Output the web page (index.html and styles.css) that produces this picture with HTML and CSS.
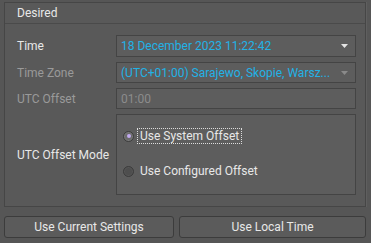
FILE: index.html
```html
<!DOCTYPE html>
<html>
<head>
<meta charset="utf-8">
<link rel="stylesheet" href="styles.css">
</head>
<body>
<div class="panel">
  <div class="group">
    <div class="group-header">Desired</div>
    <div class="form">
      <div class="label">Time</div>
      <div class="combo combo-tall">
        <span class="value">18 December 2023 11:22:42</span>
        <svg class="arrow" width="7" height="4" viewBox="0 0 7 4"><polygon points="0,0 7,0 3.5,4" fill="#e4e4e4"/></svg>
      </div>
      <div class="label disabled">Time Zone</div>
      <div class="combo">
        <span class="value">(UTC+01:00) Sarajewo, Skopie, Warsz...</span>
        <svg class="arrow" width="7" height="4" viewBox="0 0 7 4"><polygon points="0,0 7,0 3.5,4" fill="#8a8a8a"/></svg>
      </div>
      <div class="label disabled">UTC Offset</div>
      <div class="field">01:00</div>
      <div class="label">UTC Offset Mode</div>
      <div class="radio-box">
        <div class="radio-row">
          <span class="radio checked"></span>
          <span class="radio-text focused">Use System Offset</span>
        </div>
        <div class="radio-row">
          <span class="radio"></span>
          <span class="radio-text">Use Configured Offset</span>
        </div>
      </div>
    </div>
  </div>
  <div class="buttons">
    <div class="btn btn-left">Use Current Settings</div>
    <div class="btn btn-right">Use Local Time</div>
  </div>
</div>
</body>
</html>
```

FILE: styles.css
```css
html, body {
  margin: 0;
  padding: 0;
  background: #565656;
  width: 371px;
  height: 243px;
  overflow: hidden;
  font-family: Roboto, "Noto Sans", sans-serif;
  font-size: 12px;
  color: #e8e8e8;
}

.panel {
  padding: 2px 4px 0 4px;
}

.group {
  border: 1px solid #464646;
  background: #595959;
  height: 205px;
  box-sizing: border-box;
  margin-right: 1px;
  box-shadow: 1px 0 0 #5f5f5f;
}

.group-header {
  height: 20px;
  border-bottom: 1px solid #4a4a4a;
  padding-left: 12px;
  line-height: 20px;
}

.form {
  display: grid;
  grid-template-columns: 99px 1fr;
  grid-template-rows: 22px 21px 21px 81px;
  row-gap: 5px;
  padding: 11px 9px 0 12px;
  align-items: center;
}

.label {
  color: #e8e8e8;
}

.label.disabled {
  color: #9a9a9a;
}

.combo, .field {
  height: 21px;
  box-sizing: border-box;
  border: 1px solid #444444;
  background: #5d5d5d;
  display: flex;
  align-items: center;
  padding-left: 4px;
  padding-right: 7px;
}

.combo-tall {
  height: 22px;
}

.combo .value {
  flex: 1;
  color: #22b2e6;
  white-space: nowrap;
  overflow: hidden;
}

.arrow {
  display: block;
  flex: none;
}

.field {
  color: #8c8c8c;
}

.radio-box {
  height: 81px;
  box-sizing: border-box;
  border: 1px solid #444444;
  background: #5d5d5d;
  display: flex;
  flex-direction: column;
  padding: 13px 0 0 6px;
  gap: 19px;
}

.radio-row {
  height: 16px;
  display: flex;
  align-items: center;
  gap: 4px;
}

.radio {
  width: 11px;
  height: 11px;
  box-sizing: border-box;
  border-radius: 50%;
  background: #4e4e4e;
  border: 1px solid #3c3c3c;
  box-shadow: inset 0 0 0 1px #575757;
  display: flex;
  align-items: center;
  justify-content: center;
}

.radio.checked {
  background: #6a6a6a;
  box-shadow: inset 0 0 0 1px #7a7a7a;
}

.radio.checked::after {
  content: "";
  width: 4px;
  height: 4px;
  border-radius: 50%;
  background: #c2aaf0;
}

.radio-text.focused {
  outline: 1px dotted #dcdcdc;
  padding: 0 2px;
}

.radio-text {
  padding-left: 2px;
}

.buttons {
  display: flex;
  gap: 5px;
  margin-top: 9px;
}

.btn {
  height: 22px;
  box-sizing: border-box;
  border: 1px solid #3c3c3c;
  border-radius: 3px;
  background: #5b5b5b;
  display: flex;
  align-items: center;
  justify-content: center;
  color: #e8e8e8;
}

.btn-left {
  width: 170px;
}

.btn-right {
  flex: 1;
  margin-right: 1px;
}
```
